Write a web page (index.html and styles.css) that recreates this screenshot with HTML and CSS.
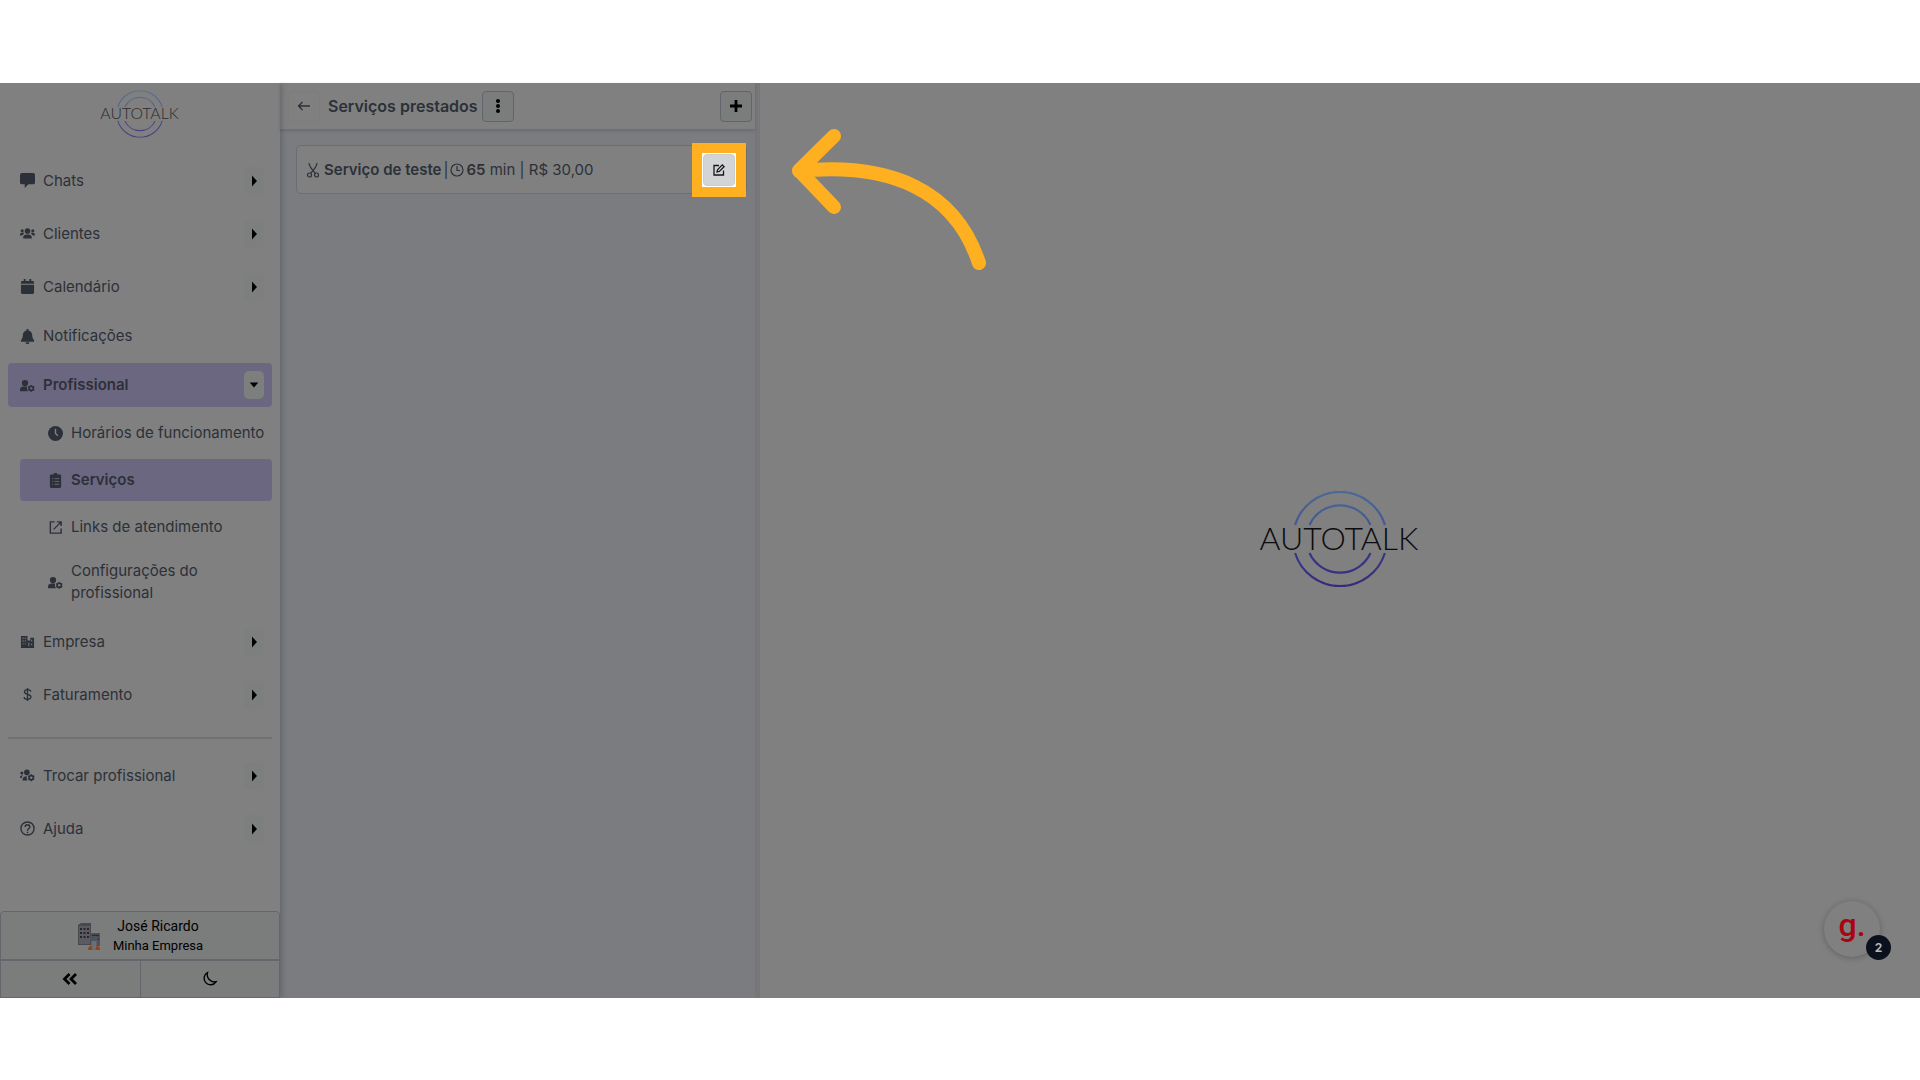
FILE: index.html
```html
<!DOCTYPE html>
<html lang="pt-BR">
<head>
    <meta charset="UTF-8">
    <meta name="viewport" content="width=device-width, initial-scale=1.0">
    <title>Autotalk - Serviços prestados</title>
    <link rel="stylesheet" href="styles.css">
</head>
<body>
    <svg class="sprite" width="0" height="0" aria-hidden="true">
        <linearGradient id="ring" x1="0" y1="0" x2="0" y2="96" gradientUnits="userSpaceOnUse">
            <stop offset="0" stop-color="#4c6a94"/>
            <stop offset="0.35" stop-color="#445791"/>
            <stop offset="0.65" stop-color="#38368a"/>
            <stop offset="1" stop-color="#352a78"/>
        </linearGradient>
        <symbol id="rings" viewBox="0 0 170 96">
            <g fill="none" stroke="url(#ring)" stroke-width="2.2">
                <path d="M40.100 34A47 47 0 0 1 129.900 34"/>
                <path d="M54.500 34A33.500 33.500 0 0 1 115.500 34"/>
                <path d="M40.100 62A47 47 0 0 0 129.900 62"/>
                <path d="M54.500 62A33.500 33.500 0 0 0 115.500 62"/>
            </g>
        </symbol>
        <symbol id="right" viewBox="0 0 10 14"><path d="M3 1.500l5 5.500-5 5.500z"/></symbol>
        <symbol id="down" viewBox="0 0 14 10"><path d="M2 2h10L7 8z"/></symbol>
        <symbol id="user-cog" viewBox="0 0 24 20">
            <circle cx="8" cy="6" r="5"/>
            <path d="M0 19v-2c0-4 2.500-5.500 6-5.500h5.500c-.8 2.500-.3 5.500 1.500 7.500z"/>
            <circle cx="18" cy="14.500" r="3.300" fill="none" stroke="currentColor" stroke-width="2.600"/>
            <path d="M18 9v2.500M18 17.500V20M13.200 11.700l2 1.200M20.800 16.100l2 1.200M13.200 17.300l2-1.200M20.800 12.900l2-1.200" stroke="currentColor" stroke-width="2.200"/>
        </symbol>
    </svg>

    <div class="app">
        <aside class="sidebar">
            <a class="brand" href="#">
                <svg class="brand-logo" viewBox="0 0 170 96">
                    <use href="#rings"/>
                    <text class="logo-text" x="84" y="59" text-anchor="middle">AUTOTALK</text>
                </svg>
            </a>

            <nav>
                <ul class="menu">
                    <li class="item">
                        <a href="#"><svg class="icon" viewBox="0 0 16 16"><path d="M2 0h12a2 2 0 0 1 2 2v8a2 2 0 0 1-2 2H9l-4 4v-4H2a2 2 0 0 1-2-2V2a2 2 0 0 1 2-2z"/></svg>Chats</a>
                        <button class="toggle" aria-label="Abrir Chats"><svg><use href="#right"/></svg></button>
                    </li>
                    <li class="item">
                        <a href="#"><svg class="icon" viewBox="0 0 24 20"><circle cx="12" cy="6" r="4.500"/><circle cx="3.500" cy="5.500" r="2.500"/><circle cx="20.500" cy="5.500" r="2.500"/><path d="M5 18c0-5 2-6.500 7-6.500s7 1.500 7 6.500zM0 13c0-3 1-4.500 5-4.500l2 1.500c-2 1-3 2-3.300 3zM24 13c0-3-1-4.500-5-4.500L17 10c2 1 3 2 3.300 3z"/></svg>Clientes</a>
                        <button class="toggle" aria-label="Abrir Clientes"><svg><use href="#right"/></svg></button>
                    </li>
                    <li class="item">
                        <a href="#"><svg class="icon" viewBox="0 0 16 16"><path d="M1 3.500a1.500 1.500 0 0 1 1.500-1.500H4V0h2v2h4V0h2v2h1.500A1.500 1.500 0 0 1 15 3.500V5H1zM1 6h14v8.500a1.500 1.500 0 0 1-1.500 1.500h-11A1.500 1.500 0 0 1 1 14.500z"/></svg>Calendário</a>
                        <button class="toggle" aria-label="Abrir Calendário"><svg><use href="#right"/></svg></button>
                    </li>
                    <li class="item item-plain">
                        <a href="#"><svg class="icon" viewBox="0 0 16 16"><path d="M7 0h2v1.500c2.500.5 4 2.500 4 5 0 3 1 4.500 2 5.500v1.500H1V12c1-1 2-2.500 2-5.500 0-2.500 1.500-4.500 4-5zM6 14.200h4a2 2 0 0 1-4 0z"/></svg>Notificações</a>
                    </li>
                    <li>
                        <div class="item item-active">
                            <a href="#"><svg class="icon"><use href="#user-cog"/></svg>Profissional</a>
                            <button class="toggle" aria-label="Fechar Profissional"><svg><use href="#down"/></svg></button>
                        </div>
                        <ul class="submenu">
                            <li><a href="#"><svg class="icon" viewBox="0 0 16 16"><circle cx="8" cy="8" r="8"/><path d="M8 3v5l2.500 2.500" fill="none" stroke="#808080" stroke-width="1.500"/></svg>Horários de funcionamento</a></li>
                            <li><a class="current" href="#"><svg class="icon" viewBox="0 0 16 16"><path d="M3.500 1.500H6a2 2 0 0 1 4 0h2.500A1.500 1.500 0 0 1 14 3v11.500a1.500 1.500 0 0 1-1.500 1.500h-9A1.500 1.500 0 0 1 2 14.500V3a1.500 1.500 0 0 1 1.500-1.500z"/><path d="M4.500 6h1M7 6h5M4.500 9h1M7 9h5M4.500 12h1M7 12h5" stroke="#6b6781" stroke-width="1"/></svg>Serviços</a></li>
                            <li><a href="#"><svg class="icon" viewBox="0 0 16 16" fill="none" stroke="currentColor" stroke-width="1.500"><path d="M7 2H2.500v12h11.500V9M9.500 2H14v4.500M14 2L6 10"/></svg>Links de atendimento</a></li>
                            <li><a href="#"><svg class="icon"><use href="#user-cog"/></svg>Configurações do profissional</a></li>
                        </ul>
                    </li>
                    <li class="item">
                        <a href="#"><svg class="icon" viewBox="0 0 16 16"><path fill-rule="evenodd" d="M1 2h7v5h3V4h4v11H1zM2.500 4v1H4V4zm2.500 0v1h1.500V4zM2.500 7v1H4V7zM5 7v1h1.500V7zm-2.500 3v1H4v-1zM5 10v1h1.500v-1zm4-1v4h1V9zm3-3v2h1V6zm0 4v2h1v-2z"/></svg>Empresa</a>
                        <button class="toggle" aria-label="Abrir Empresa"><svg><use href="#right"/></svg></button>
                    </li>
                    <li class="item">
                        <a href="#"><svg class="icon" viewBox="0 0 16 16" fill="none" stroke="currentColor" stroke-width="1.400"><path d="M8 1v14M11.500 5C11.500 2 4.700 2 4.700 5.200c0 3.300 7 2 7 5.400 0 3.300-7.300 3.200-7.300 0"/></svg>Faturamento</a>
                        <button class="toggle" aria-label="Abrir Faturamento"><svg><use href="#right"/></svg></button>
                    </li>
                </ul>
                <hr class="divider">
                <ul class="menu">
                    <li class="item">
                        <a href="#"><svg class="icon" viewBox="0 0 24 20"><circle cx="11" cy="5" r="4.500"/><circle cx="3" cy="6" r="2.500"/><path d="M4 18c0-5 2-7 7-7-1 3 0 5.500 1.500 7zM0 14c0-3 1-4.500 5-4.500-1.500 1.500-2 3-2.300 4.500z"/><circle cx="18" cy="13.500" r="3.300" fill="none" stroke="currentColor" stroke-width="2.600"/><path d="M18 8v2.500M18 16.500V19M13.200 10.700l2 1.200M20.800 15.100l2 1.200M13.200 16.300l2-1.200M20.800 11.900l2-1.200" stroke="currentColor" stroke-width="2.200"/></svg>Trocar profissional</a>
                        <button class="toggle" aria-label="Abrir Trocar profissional"><svg><use href="#right"/></svg></button>
                    </li>
                    <li class="item">
                        <a href="#"><svg class="icon" viewBox="0 0 16 16" fill="none" stroke="currentColor" stroke-width="1.500"><circle cx="8" cy="8" r="7"/><path d="M5.500 6.500c0-3.300 5-3.300 5 0C10.500 8 8 8 8 10.300M8 11.500V13"/></svg>Ajuda</a>
                        <button class="toggle" aria-label="Abrir Ajuda"><svg><use href="#right"/></svg></button>
                    </li>
                </ul>
            </nav>

            <footer class="account">
                <button class="profile">
                    <svg class="avatar" viewBox="0 0 24 28">
                        <path d="M1 3l3-2h10v22H1z" fill="#48484d"/>
                        <path d="M2 4h11v18H2z" fill="#5c5a60"/>
                        <path d="M3 6h2v2H3zM6.500 6h2v2h-2zM10 6h2v2h-2zM3 10h2v2H3zM6.500 10h2v2h-2zM10 10h2v2h-2zM3 14h2v2H3zM6.500 14h2v2h-2zM10 14h2v2h-2z" fill="#25262f"/>
                        <path d="M14 11h9v13h-9z" fill="#555056"/>
                        <path d="M15 13.500h7M15 17h7" stroke="#2b2b33" stroke-width="1.500"/>
                        <path d="M11 28c0-3.500 2-5 6-5s6 1.500 6 5z" fill="#94441a"/>
                        <circle cx="17" cy="18" r="4" fill="#4a5560"/>
                        <path d="M14.500 19h5v5l-1 4h-3l-1-4z" fill="#6c7076"/>
                    </svg>
                    <span class="profile-name">José Ricardo<small>Minha Empresa</small></span>
                </button>
                <div class="account-actions">
                    <button aria-label="Recolher menu"><svg width="16" height="14" viewBox="0 0 16 14" fill="none" stroke="currentColor" stroke-width="2.800"><path d="M7.500 2l-5 5 5 5M14 2L9 7l5 5"/></svg></button>
                    <button aria-label="Modo escuro"><svg width="16" height="16" viewBox="0 0 16 16" fill="none" stroke="currentColor" stroke-width="1.400"><path d="M5.500 1.500A6.500 6.500 0 1 0 14 10.800 7.500 7.500 0 0 1 5.500 1.500z"/></svg></button>
                </div>
            </footer>
        </aside>

        <section class="panel">
            <header class="panel-header">
                <button class="square back" aria-label="Voltar"><svg width="14" height="12" viewBox="0 0 14 12" fill="none" stroke="currentColor" stroke-width="1.300"><path d="M13 6H1.500M5.500 2l-4 4 4 4"/></svg></button>
                <h1>Serviços prestados</h1>
                <button class="square" aria-label="Mais opções"><svg width="6" height="16" viewBox="0 0 6 16"><circle cx="3" cy="3" r="2"/><circle cx="3" cy="8" r="2"/><circle cx="3" cy="13" r="2"/></svg></button>
                <button class="square add" aria-label="Adicionar serviço"><svg width="14" height="14" viewBox="0 0 14 14" stroke="currentColor" stroke-width="2.800"><path d="M7 1v12M1 7h12"/></svg></button>
            </header>
            <ul class="services">
                <li class="service">
                    <svg class="scissors" width="14" height="16" viewBox="0 0 14 16" fill="none" stroke="currentColor" stroke-width="1.200"><path d="M3 1c0 3 1.500 5 6.500 10.500M11 1c0 3-1.500 5-6.500 10.500"/><circle cx="3.500" cy="13" r="2"/><circle cx="10.500" cy="13" r="2"/></svg>
                    <strong>Serviço de teste</strong>
                    <span>|</span>
                    <svg width="14" height="14" viewBox="0 0 14 14" fill="none" stroke="currentColor" stroke-width="1.200"><circle cx="7" cy="7" r="6"/><path d="M7 3v4.500h3"/></svg>
                    <span><strong>65</strong> min | R$ 30,00</span>
                    <span class="spotlight">
                        <button class="edit" aria-label="Editar serviço"><svg width="12" height="12" viewBox="0 0 12 12" fill="none" stroke="currentColor" stroke-width="1.300"><path d="M6 1.500H1v9.500h9.500V6.500M4 8l.5-2.300L9.300.9l1.800 1.800-4.800 4.800z"/></svg></button>
                    </span>
                </li>
            </ul>
        </section>

        <main class="content">
            <svg class="content-logo" viewBox="0 0 170 96">
                <use href="#rings"/>
                <text class="logo-text" x="84" y="59" text-anchor="middle">AUTOTALK</text>
            </svg>
            <svg class="arrow" width="200" height="150" viewBox="790 125 200 150" aria-hidden="true">
                <path d="M834 136L799 170.500 834 207M799 171C890 162 955 190 979 263"/>
            </svg>
            <button class="widget" aria-label="Abrir guias">g.<span class="badge">2</span></button>
        </main>
    </div>
</body>
</html>
```

FILE: styles.css
```css
* {
    box-sizing: border-box;
}
body {
    margin: 0;
    min-height: 100vh;
    padding: 83px 0 82px;
    display: flex;
    background-color: #fff;
    color: #2c3038;
    font-family: Inter, "Liberation Sans", sans-serif;
    font-size: 15px;
    line-height: 22px;
}
ul {
    list-style: none;
    margin: 0;
    padding: 0;
}
a {
    color: inherit;
    text-decoration: none;
}
button {
    display: flex;
    align-items: center;
    justify-content: center;
    padding: 0;
    border: none;
    color: #000;
    font-family: inherit;
    cursor: pointer;
}
svg {
    flex-shrink: 0;
}
.sprite {
    position: absolute;
}
.logo-text {
    font-family: Lato, sans-serif;
    font-size: 32px;
    font-weight: 300;
    fill: #0c0c0e;
}
.app {
    flex: 1;
    display: flex;
    background-color: #808080;
}

/* sidebar */
.sidebar {
    width: 280px;
    flex-shrink: 0;
    display: flex;
    flex-direction: column;
    box-shadow: 1px 0 6px rgba(40, 40, 70, 0.35);
    clip-path: inset(0 -8px 0 0);
    z-index: 1;
}
.brand {
    height: 75px;
    padding-top: 7px;
    text-align: center;
}
.brand-logo {
    width: 84px;
    height: 48px;
    opacity: 0.75;
}
.menu {
    display: flex;
    flex-direction: column;
    gap: 8px;
    padding: 0 8px;
}
.item {
    display: flex;
    align-items: center;
    height: 45px;
    padding: 0 8px 0 12px;
    border-radius: 4px;
}
.item a {
    flex: 1;
    display: flex;
    align-items: center;
    gap: 8px;
}
.item-plain {
    height: 38px;
}
.item-active {
    height: 44px;
    background-color: #6b6781;
    font-weight: 600;
}
.icon {
    width: 15px;
    height: 15px;
    fill: currentColor;
}
.icon[fill="none"] {
    fill: none;
}
.toggle {
    width: 20px;
    height: 28px;
    border-radius: 5px;
    background-color: #7d7f7e;
}
.toggle svg {
    width: 12px;
    height: 14px;
}
.submenu {
    display: flex;
    flex-direction: column;
    gap: 5px;
    padding: 5px 0 0 12px;
}
.submenu a {
    display: flex;
    align-items: center;
    gap: 8px;
    min-height: 42px;
    padding: 7px 0 7px 28px;
    border-radius: 4px;
}
.submenu .current {
    background-color: #6b6781;
    font-weight: 600;
}
.divider {
    height: 2px;
    margin: 20px 8px 14px;
    border: none;
    background-color: #717273;
}
.account {
    margin-top: auto;
    border: 1px solid #64666c;
    border-radius: 4px 4px 0 0;
    background-color: #7b7d7c;
}
.account button {
    background: none;
}
.account .profile {
    width: 100%;
    height: 49px;
    gap: 12px;
    border-bottom: 2px solid #64666c;
}
.avatar {
    width: 24px;
    height: 30px;
}
.profile-name {
    font-family: Roboto, sans-serif;
    font-size: 14px;
    line-height: 19px;
}
.profile-name small {
    display: block;
    font-size: 13px;
}
.account-actions {
    display: flex;
}
.account-actions button {
    flex: 1;
    height: 36px;
}
.account-actions button + button {
    border-left: 1px solid #64666c;
}

/* services panel */
.panel {
    width: 480px;
    flex-shrink: 0;
    border-right: 5px solid #76767b;
    background-color: #7a7c7f;
}
.panel-header {
    display: flex;
    align-items: center;
    gap: 4px;
    height: 47px;
    padding: 0 3px 0 8px;
    border-bottom: 1px solid #6d6f73;
    background-color: #808080;
    box-shadow: 0 1px 3px rgba(40, 40, 50, 0.2);
}
h1 {
    margin: 0;
    font-size: 16px;
    font-weight: 600;
}
.square {
    width: 32px;
    height: 31px;
    border: 1px solid #5f656b;
    border-radius: 4px;
    background-color: #7b7d7c;
}
.back {
    margin-right: 4px;
    border-color: #7d7d7e;
    background: none;
    color: #2c3038;
}
.add {
    margin-left: auto;
}
.services {
    padding: 15px 8px 0 16px;
}
.service {
    display: flex;
    align-items: center;
    gap: 2px;
    height: 49px;
    padding: 0 10px 0 9px;
    border: 1px solid #6b6d72;
    border-radius: 5px;
    background-color: #808080;
}
.service strong {
    font-weight: 600;
}
.scissors {
    margin-right: 2px;
}
/* highlighted step of the tour */
.spotlight {
    margin-left: auto;
    padding: 1px;
    background-color: #fff;
    box-shadow: 0 0 0 10px #ffb020;
}
.edit {
    width: 32px;
    height: 32px;
    border: 1px solid #c9ccd2;
    border-radius: 4px;
    background-color: #d3d4d5;
    color: #16181c;
}

/* empty content area */
.content {
    flex: 1;
    display: flex;
    align-items: center;
    justify-content: center;
    position: relative;
    padding-bottom: 4px;
}
.content-logo {
    width: 170px;
    height: 96px;
}
.arrow {
    position: absolute;
    top: 42px;
    left: 30px;
    fill: none;
    stroke: #ffb020;
    stroke-width: 14px;
    stroke-linecap: round;
    stroke-linejoin: round;
}
.widget {
    position: absolute;
    right: 40px;
    bottom: 41px;
    width: 56px;
    height: 56px;
    padding-bottom: 8px;
    border-radius: 50%;
    background-color: #808080;
    box-shadow: 0 1px 6px rgba(0, 0, 0, 0.25);
    color: #a80510;
    font-family: Roboto, sans-serif;
    font-size: 32px;
    font-weight: 500;
}
.badge {
    position: absolute;
    right: -11px;
    bottom: -3px;
    width: 25px;
    height: 25px;
    border-radius: 50%;
    background-color: #0a101c;
    color: #b4b6ba;
    font-family: Inter, sans-serif;
    font-size: 12px;
    font-weight: 700;
    line-height: 25px;
}
```
